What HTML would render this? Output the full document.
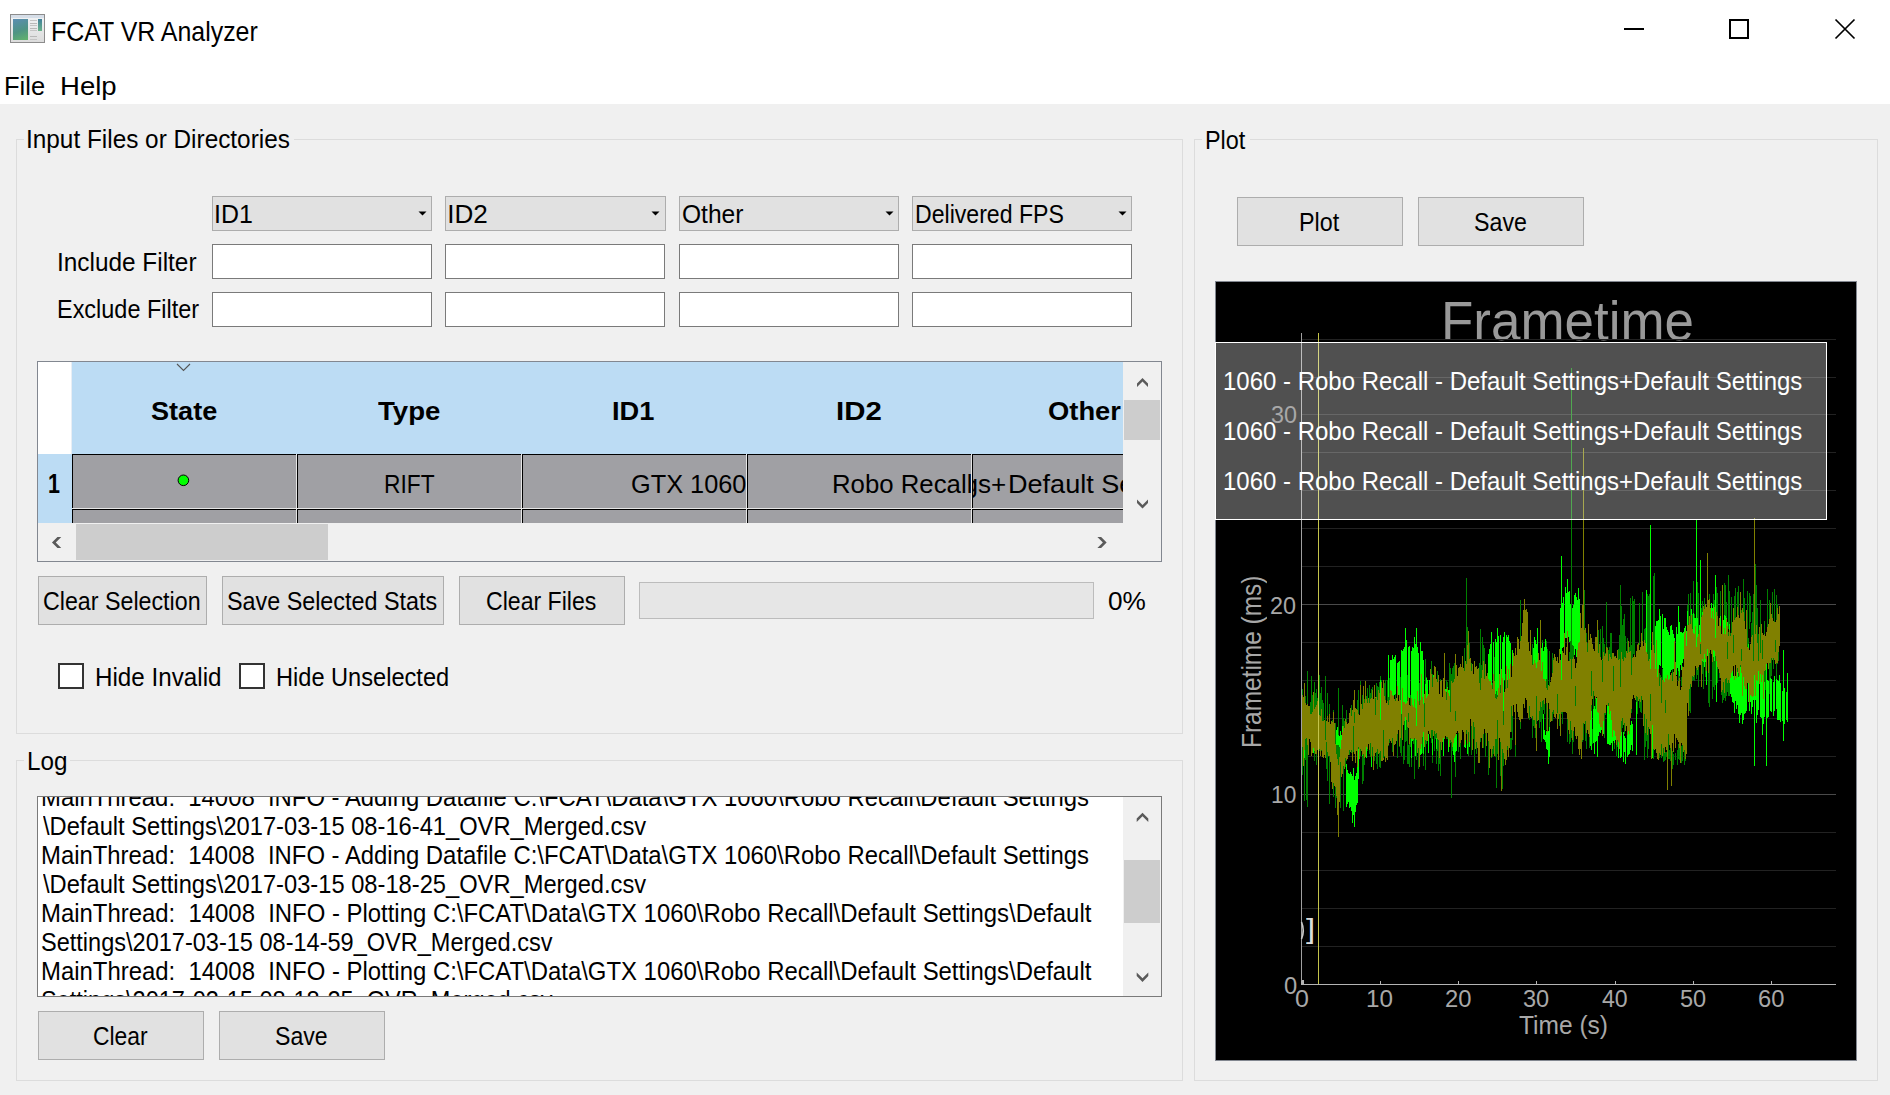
<!DOCTYPE html>
<html><head><meta charset="utf-8"><style>
*{margin:0;padding:0;box-sizing:border-box}
html,body{width:1890px;height:1095px;overflow:hidden;background:#f0f0f0;font-family:"Liberation Sans",sans-serif;color:#000}
.a{position:absolute}
.t{position:absolute;white-space:pre;line-height:1}
.btn{position:absolute;background:#e1e1e1;border:1px solid #adadad}
.edit{position:absolute;background:#fff;border:1px solid #7a7a7a}
.grp{position:absolute;border:1px solid #dcdcdc}
.lbl{position:absolute;background:#f0f0f0}
</style></head>
<body>
<div class="a" style="left:0px;top:0px;width:1890px;height:104px;background:#fff;"></div>
<div class="a" style="left:10px;top:14px;width:35px;height:29px;border:1px solid #8c8c8c;background:linear-gradient(#f2f4f6,#dcdcdc)">
      <div class="a" style="left:0;top:0;width:33px;height:3px;background:#d6dee8"></div>
      <div class="a" style="left:2px;top:4px;width:15px;height:21px;background:linear-gradient(160deg,#5b8db3,#4f9484 55%,#63b46c)"></div>
      <div class="a" style="left:19px;top:5px;width:7px;height:1px;background:#c4c4c4"></div>
      <div class="a" style="left:19px;top:8px;width:7px;height:1px;background:#b8b8b8"></div>
      <div class="a" style="left:19px;top:10px;width:7px;height:1px;background:#c4c4c4"></div>
      <div class="a" style="left:19px;top:13px;width:7px;height:1px;background:#b8b8b8"></div>
      <div class="a" style="left:19px;top:15px;width:7px;height:1px;background:#c4c4c4"></div>
      <div class="a" style="left:19px;top:21px;width:7px;height:1px;background:#b8b8b8"></div>
      <div class="a" style="left:19px;top:24px;width:7px;height:1px;background:#c4c4c4"></div>
      <div class="a" style="left:27px;top:4px;width:4px;height:12px;background:linear-gradient(#3f7f9a,#6ab48a)"></div>
    </div>
<div class="t" style="left:50.91px;top:18.00px;font-size:27.54px;transform:scaleX(0.9050);transform-origin:0 0;">FCAT VR Analyzer</div>
<div class="a" style="left:1624px;top:28px;width:20px;height:2px;background:#000;"></div>
<div class="a" style="left:1729px;top:19px;width:20px;height:20px;border:2px solid #000;"></div>
<svg class="a" style="left:1834px;top:18px" width="22" height="22" viewBox="0 0 22 22"><path d="M1.5 1.5L20.5 20.5M20.5 1.5L1.5 20.5" stroke="#000" stroke-width="1.7"/></svg>
<div class="t" style="left:3.96px;top:73.00px;font-size:26.09px;transform:scaleX(0.9776);transform-origin:0 0;">File</div>
<div class="t" style="left:60.49px;top:73.00px;font-size:26.09px;transform:scaleX(1.0571);transform-origin:0 0;">Help</div>
<div class="a" style="left:16px;top:139px;width:1167px;height:595px;border:1px solid #dcdcdc;"></div>
<div class="a" style="left:24px;top:130px;width:270px;height:20px;background:#f0f0f0;"></div>
<div class="t" style="left:26.41px;top:127.00px;font-size:25.36px;transform:scaleX(0.9603);transform-origin:0 0;">Input Files or Directories</div>
<div class="a" style="left:212px;top:196px;width:220px;height:35px;background:#e1e1e1;border:1px solid #adadad;"></div>
<div class="t" style="left:214.36px;top:201.00px;font-size:26.09px;transform:scaleX(0.9556);transform-origin:0 0;">ID1</div>
<svg class="a" style="left:418px;top:211px" width="10" height="6" viewBox="0 0 10 6"><path d="M0.5 0.5H8.5L4.5 4.5Z" fill="#000"/></svg>
<div class="a" style="left:212px;top:244px;width:220px;height:35px;background:#fff;border:1px solid #7a7a7a;"></div>
<div class="a" style="left:212px;top:292px;width:220px;height:35px;background:#fff;border:1px solid #7a7a7a;"></div>
<div class="a" style="left:445px;top:196px;width:221px;height:35px;background:#e1e1e1;border:1px solid #adadad;"></div>
<div class="t" style="left:447.25px;top:201.00px;font-size:26.09px;">ID2</div>
<svg class="a" style="left:651px;top:211px" width="10" height="6" viewBox="0 0 10 6"><path d="M0.5 0.5H8.5L4.5 4.5Z" fill="#000"/></svg>
<div class="a" style="left:445px;top:244px;width:220px;height:35px;background:#fff;border:1px solid #7a7a7a;"></div>
<div class="a" style="left:445px;top:292px;width:220px;height:35px;background:#fff;border:1px solid #7a7a7a;"></div>
<div class="a" style="left:679px;top:196px;width:220px;height:35px;background:#e1e1e1;border:1px solid #adadad;"></div>
<div class="t" style="left:682.37px;top:201.00px;font-size:26.09px;transform:scaleX(0.9426);transform-origin:0 0;">Other</div>
<svg class="a" style="left:885px;top:211px" width="10" height="6" viewBox="0 0 10 6"><path d="M0.5 0.5H8.5L4.5 4.5Z" fill="#000"/></svg>
<div class="a" style="left:679px;top:244px;width:220px;height:35px;background:#fff;border:1px solid #7a7a7a;"></div>
<div class="a" style="left:679px;top:292px;width:220px;height:35px;background:#fff;border:1px solid #7a7a7a;"></div>
<div class="a" style="left:912px;top:196px;width:220px;height:35px;background:#e1e1e1;border:1px solid #adadad;"></div>
<div class="t" style="left:914.75px;top:201.00px;font-size:26.09px;transform:scaleX(0.8855);transform-origin:0 0;">Delivered FPS</div>
<svg class="a" style="left:1118px;top:211px" width="10" height="6" viewBox="0 0 10 6"><path d="M0.5 0.5H8.5L4.5 4.5Z" fill="#000"/></svg>
<div class="a" style="left:912px;top:244px;width:220px;height:35px;background:#fff;border:1px solid #7a7a7a;"></div>
<div class="a" style="left:912px;top:292px;width:220px;height:35px;background:#fff;border:1px solid #7a7a7a;"></div>
<div class="t" style="left:56.51px;top:249.00px;font-size:26.09px;transform:scaleX(0.9345);transform-origin:0 0;">Include Filter</div>
<div class="t" style="left:56.82px;top:297.00px;font-size:25.80px;transform:scaleX(0.9093);transform-origin:0 0;">Exclude Filter</div>
<div class="a" style="left:37px;top:361px;width:1125px;height:201px;background:#f0f0f0;border:1px solid #828790;"></div>
<div class="a" style="left:38px;top:362px;width:34px;height:92px;background:#fff;"></div>
<div class="a" style="left:71px;top:362px;width:1px;height:92px;background:#e8eef4;"></div>
<div class="a" style="left:72px;top:362px;width:1051px;height:92px;background:#bcdcf4;"></div>
<div class="a" style="left:38px;top:454px;width:34px;height:69px;background:#bcdcf4;"></div>
<svg class="a" style="left:176px;top:363px" width="15" height="9" viewBox="0 0 15 9"><path d="M1 1L7.5 7.5L14 1" stroke="#555" stroke-width="1.1" fill="none"/></svg>
<div class="t" style="left:150.89px;top:398.00px;font-size:26.38px;transform:scaleX(1.0274);transform-origin:0 0;font-weight:bold;">State</div>
<div class="t" style="left:378.12px;top:398.00px;font-size:26.38px;transform:scaleX(1.0464);transform-origin:0 0;font-weight:bold;">Type</div>
<div class="t" style="left:611.79px;top:398.00px;font-size:26.38px;transform:scaleX(1.0335);transform-origin:0 0;font-weight:bold;">ID1</div>
<div class="t" style="left:836.04px;top:398.00px;font-size:26.38px;transform:scaleX(1.1138);transform-origin:0 0;font-weight:bold;">ID2</div>
<div class="t" style="left:1047.61px;top:398.00px;font-size:26.38px;transform:scaleX(1.0375);transform-origin:0 0;font-weight:bold;">Other</div>
<div class="t" style="left:48.11px;top:471.00px;font-size:26.81px;transform:scaleX(0.8015);transform-origin:0 0;font-weight:bold;">1</div>
<div class="a" style="left:72px;top:454px;width:1051px;height:69px;overflow:hidden;background:#e6e6e6">
<div class="a" style="left:0px;top:0px;width:224px;height:54px;background:#a0a0a4;border-left:1px solid #000;border-top:1px solid #000"></div>
<div class="a" style="left:0px;top:55px;width:224px;height:54px;background:#a0a0a4;border-left:1px solid #000;border-top:1px solid #000"></div>
<div class="a" style="left:225px;top:0px;width:224px;height:54px;background:#a0a0a4;border-left:1px solid #000;border-top:1px solid #000"></div>
<div class="a" style="left:225px;top:55px;width:224px;height:54px;background:#a0a0a4;border-left:1px solid #000;border-top:1px solid #000"></div>
<div class="a" style="left:450px;top:0px;width:224px;height:54px;background:#a0a0a4;border-left:1px solid #000;border-top:1px solid #000"></div>
<div class="a" style="left:450px;top:55px;width:224px;height:54px;background:#a0a0a4;border-left:1px solid #000;border-top:1px solid #000"></div>
<div class="a" style="left:675px;top:0px;width:224px;height:54px;background:#a0a0a4;border-left:1px solid #000;border-top:1px solid #000"></div>
<div class="a" style="left:675px;top:55px;width:224px;height:54px;background:#a0a0a4;border-left:1px solid #000;border-top:1px solid #000"></div>
<div class="a" style="left:900px;top:0px;width:224px;height:54px;background:#a0a0a4;border-left:1px solid #000;border-top:1px solid #000"></div>
<div class="a" style="left:900px;top:55px;width:224px;height:54px;background:#a0a0a4;border-left:1px solid #000;border-top:1px solid #000"></div>
</div>
<svg class="a" style="left:176px;top:473px" width="15" height="15" viewBox="0 0 15 15"><circle cx="7.4" cy="7.3" r="5.3" fill="#00ff00" stroke="#000" stroke-width="1"/></svg>
<div class="t" style="left:383.88px;top:471.00px;font-size:26.09px;transform:scaleX(0.8733);transform-origin:0 0;">RIFT</div>
<div class="a" style="left:522px;top:454px;width:224px;height:54px;overflow:hidden"><div class="t" style="left:108.53px;top:17.00px;font-size:26.09px;transform:scaleX(0.9708);transform-origin:0 0;">GTX 1060</div></div>
<div class="a" style="left:747px;top:454px;width:224px;height:54px;overflow:hidden"><div class="t" style="left:84.84px;top:17.00px;font-size:26.09px;transform:scaleX(0.9880);transform-origin:0 0;">Robo Recall</div></div>
<div class="a" style="left:973px;top:454px;width:150px;height:54px;overflow:hidden"><div class="t" style="left:-9.54px;top:17.00px;font-size:26.09px;">gs+</div><div class="t" style="left:34.63px;top:17.00px;font-size:26.09px;transform:scaleX(1.0380);transform-origin:0 0;">Default Settings</div></div>
<div class="a" style="left:1123px;top:362px;width:38px;height:161px;background:#f0f0f0;"></div>
<div class="a" style="left:1124px;top:400px;width:36px;height:40px;background:#cdcdcd;"></div>
<svg class="a" style="left:0;top:0;overflow:visible" width="1" height="1"><polygon points="1142.50,378.00 1148.00,383.50 1148.00,387.00 1142.50,381.50 1137.00,387.00 1137.00,383.50" fill="#5a5a5a"/></svg>
<svg class="a" style="left:0;top:0;overflow:visible" width="1" height="1"><polygon points="1142.50,508.50 1148.00,503.00 1148.00,499.50 1142.50,505.00 1137.00,499.50 1137.00,503.00" fill="#5a5a5a"/></svg>
<div class="a" style="left:38px;top:523px;width:1085px;height:38px;background:#f0f0f0;"></div>
<div class="a" style="left:76px;top:524px;width:252px;height:36px;background:#cdcdcd;"></div>
<svg class="a" style="left:0;top:0;overflow:visible" width="1" height="1"><polygon points="51.95,542.50 57.45,548.00 61.25,548.00 55.75,542.50 61.25,537.00 57.45,537.00" fill="#5a5a5a"/></svg>
<svg class="a" style="left:0;top:0;overflow:visible" width="1" height="1"><polygon points="1106.65,542.50 1101.15,548.00 1097.35,548.00 1102.85,542.50 1097.35,537.00 1101.15,537.00" fill="#5a5a5a"/></svg>
<div class="a" style="left:1123px;top:523px;width:38px;height:38px;background:#f0f0f0;"></div>
<div class="a" style="left:38px;top:576px;width:169px;height:49px;background:#e1e1e1;border:1px solid #adadad;"></div>
<div class="t" style="left:43.34px;top:588.00px;font-size:26.09px;transform:scaleX(0.8910);transform-origin:0 0;">Clear Selection</div>
<div class="a" style="left:222px;top:576px;width:222px;height:49px;background:#e1e1e1;border:1px solid #adadad;"></div>
<div class="t" style="left:227.13px;top:588.00px;font-size:26.09px;transform:scaleX(0.8946);transform-origin:0 0;">Save Selected Stats</div>
<div class="a" style="left:459px;top:576px;width:166px;height:49px;background:#e1e1e1;border:1px solid #adadad;"></div>
<div class="t" style="left:486.04px;top:588.00px;font-size:26.09px;transform:scaleX(0.8857);transform-origin:0 0;">Clear Files</div>
<div class="a" style="left:639px;top:582px;width:455px;height:37px;background:#e6e6e6;border:1px solid #bcbcbc;"></div>
<div class="t" style="left:1107.85px;top:589.00px;font-size:25.36px;transform:scaleX(1.0332);transform-origin:0 0;">0%</div>
<div class="a" style="left:58px;top:663px;width:26px;height:26px;background:#fff;border:2px solid #333;"></div>
<div class="t" style="left:94.96px;top:664.00px;font-size:26.09px;transform:scaleX(0.9281);transform-origin:0 0;">Hide Invalid</div>
<div class="a" style="left:239px;top:663px;width:26px;height:26px;background:#fff;border:2px solid #333;"></div>
<div class="t" style="left:275.61px;top:664.00px;font-size:26.09px;transform:scaleX(0.9048);transform-origin:0 0;">Hide Unselected</div>
<div class="a" style="left:16px;top:760px;width:1167px;height:321px;border:1px solid #dcdcdc;"></div>
<div class="a" style="left:24px;top:750px;width:46px;height:22px;background:#f0f0f0;"></div>
<div class="t" style="left:26.96px;top:749.00px;font-size:25.36px;transform:scaleX(0.9572);transform-origin:0 0;">Log</div>
<div class="a" style="left:37px;top:796px;width:1125px;height:201px;background:#fff;border:1px solid #7a7a7a;"></div>
<div class="a" style="left:38px;top:797px;width:1085px;height:199px;overflow:hidden">
<div class="t" style="left:3.09px;top:-12.00px;font-size:25.94px;transform:scaleX(0.9205);transform-origin:0 0;">MainThread:  14008  INFO - Adding Datafile C:\FCAT\Data\GTX 1060\Robo Recall\Default Settings</div>
<div class="t" style="left:5.00px;top:17.00px;font-size:25.94px;transform:scaleX(0.9134);transform-origin:0 0;">\Default Settings\2017-03-15 08-16-41_OVR_Merged.csv</div>
<div class="t" style="left:3.09px;top:46.00px;font-size:25.94px;transform:scaleX(0.9205);transform-origin:0 0;">MainThread:  14008  INFO - Adding Datafile C:\FCAT\Data\GTX 1060\Robo Recall\Default Settings</div>
<div class="t" style="left:5.00px;top:75.00px;font-size:25.94px;transform:scaleX(0.9134);transform-origin:0 0;">\Default Settings\2017-03-15 08-18-25_OVR_Merged.csv</div>
<div class="t" style="left:3.09px;top:104.00px;font-size:25.94px;transform:scaleX(0.9215);transform-origin:0 0;">MainThread:  14008  INFO - Plotting C:\FCAT\Data\GTX 1060\Robo Recall\Default Settings\Default</div>
<div class="t" style="left:3.32px;top:133.00px;font-size:25.94px;transform:scaleX(0.9073);transform-origin:0 0;">Settings\2017-03-15 08-14-59_OVR_Merged.csv</div>
<div class="t" style="left:3.09px;top:162.00px;font-size:25.94px;transform:scaleX(0.9215);transform-origin:0 0;">MainThread:  14008  INFO - Plotting C:\FCAT\Data\GTX 1060\Robo Recall\Default Settings\Default</div>
<div class="t" style="left:3.32px;top:191.00px;font-size:25.94px;transform:scaleX(0.9073);transform-origin:0 0;">Settings\2017-03-15 08-18-25_OVR_Merged.csv</div>
</div>
<div class="a" style="left:1123px;top:797px;width:38px;height:199px;background:#f0f0f0;"></div>
<div class="a" style="left:1124px;top:860px;width:36px;height:63px;background:#cdcdcd;"></div>
<svg class="a" style="left:0;top:0;overflow:visible" width="1" height="1"><polygon points="1142.50,812.70 1148.30,818.50 1148.30,822.10 1142.50,816.30 1136.70,822.10 1136.70,818.50" fill="#5a5a5a"/></svg>
<svg class="a" style="left:0;top:0;overflow:visible" width="1" height="1"><polygon points="1142.50,981.90 1148.30,976.10 1148.30,972.50 1142.50,978.30 1136.70,972.50 1136.70,976.10" fill="#5a5a5a"/></svg>
<div class="a" style="left:38px;top:1011px;width:166px;height:49px;background:#e1e1e1;border:1px solid #adadad;"></div>
<div class="t" style="left:93.26px;top:1023.00px;font-size:26.09px;transform:scaleX(0.8769);transform-origin:0 0;">Clear</div>
<div class="a" style="left:219px;top:1011px;width:166px;height:49px;background:#e1e1e1;border:1px solid #adadad;"></div>
<div class="t" style="left:275.04px;top:1023.00px;font-size:26.09px;transform:scaleX(0.8862);transform-origin:0 0;">Save</div>
<div class="a" style="left:1194px;top:139px;width:684px;height:942px;border:1px solid #dcdcdc;"></div>
<div class="a" style="left:1202px;top:130px;width:48px;height:20px;background:#f0f0f0;"></div>
<div class="t" style="left:1205.03px;top:128.00px;font-size:25.51px;transform:scaleX(0.9180);transform-origin:0 0;">Plot</div>
<div class="a" style="left:1237px;top:197px;width:166px;height:49px;background:#e1e1e1;border:1px solid #adadad;"></div>
<div class="t" style="left:1299.14px;top:210.00px;font-size:25.80px;transform:scaleX(0.9029);transform-origin:0 0;">Plot</div>
<div class="a" style="left:1418px;top:197px;width:166px;height:49px;background:#e1e1e1;border:1px solid #adadad;"></div>
<div class="t" style="left:1474.04px;top:210.00px;font-size:25.80px;transform:scaleX(0.8998);transform-origin:0 0;">Save</div>
<div class="a" style="left:1215px;top:281px;width:642px;height:780px;background:#000;border:1px solid #828790"></div>
<div class="t" style="left:1441.16px;top:293.00px;font-size:56.38px;transform:scaleX(0.9395);transform-origin:0 0;color:#999999;">Frametime</div>
<svg class="a" style="left:0;top:0" width="1890" height="1095" viewBox="0 0 1890 1095" shape-rendering="crispEdges">
<path d="M1302 946.5H1836" stroke="#222222" stroke-width="1"/>
<path d="M1302 908.5H1836" stroke="#222222" stroke-width="1"/>
<path d="M1302 870.5H1836" stroke="#222222" stroke-width="1"/>
<path d="M1302 832.5H1836" stroke="#222222" stroke-width="1"/>
<path d="M1302 794.5H1836" stroke="#4a4a4a" stroke-width="1"/>
<path d="M1302 756.5H1836" stroke="#222222" stroke-width="1"/>
<path d="M1302 718.5H1836" stroke="#222222" stroke-width="1"/>
<path d="M1302 680.5H1836" stroke="#222222" stroke-width="1"/>
<path d="M1302 642.5H1836" stroke="#222222" stroke-width="1"/>
<path d="M1302 604.5H1836" stroke="#4a4a4a" stroke-width="1"/>
<path d="M1302 566.5H1836" stroke="#222222" stroke-width="1"/>
<path d="M1302 528.5H1836" stroke="#222222" stroke-width="1"/>
<path d="M1302 490.5H1836" stroke="#222222" stroke-width="1"/>
<path d="M1302 452.5H1836" stroke="#222222" stroke-width="1"/>
<path d="M1302 414.5H1836" stroke="#222222" stroke-width="1"/>
<path d="M1302 377.5H1836" stroke="#222222" stroke-width="1"/>
<path d="M1302 339.5H1836" stroke="#222222" stroke-width="1"/>
<path d="M1302.5 689V757M1304.5 691V768M1305.5 696V760M1310.5 702V736M1311.5 676V736M1312.5 695V737M1314.5 682V761M1315.5 693V743M1316.5 689V765M1317.5 698V738M1318.5 702V748M1319.5 675V751M1320.5 693V741M1321.5 687V751M1322.5 700V749M1323.5 703V751M1327.5 693V781M1329.5 704V804M1332.5 720V781M1333.5 710V797M1335.5 723V795M1336.5 739V798M1337.5 737V798M1338.5 688V791M1342.5 705V760M1343.5 718V767M1344.5 721V765M1345.5 723V767M1346.5 710V761M1349.5 714V755M1351.5 705V753M1357.5 700V755M1358.5 690V754M1360.5 681V756M1362.5 695V784M1363.5 695V781M1364.5 699V765M1365.5 696V749M1366.5 696V748M1367.5 688V751M1369.5 685V754M1370.5 693V757M1372.5 702V756M1373.5 704V758M1374.5 701V761M1376.5 700V764M1377.5 686V769M1379.5 688V767M1380.5 676V768M1381.5 680V760M1383.5 685V754M1384.5 683V757M1385.5 682V754M1387.5 680V757M1388.5 684V746M1389.5 678V743M1392.5 680V752M1395.5 685V743M1397.5 684V758M1399.5 682V747M1400.5 677V753M1401.5 676V756M1404.5 683V752M1405.5 676V742M1406.5 678V741M1407.5 675V750M1410.5 695V747M1411.5 691V754M1413.5 682V744M1416.5 688V745M1418.5 684V741M1419.5 683V740M1420.5 687V751M1421.5 674V746M1422.5 678V753M1423.5 681V747M1425.5 659V744M1426.5 677V744M1431.5 661V743M1432.5 674V740M1434.5 680V751M1435.5 675V739M1436.5 679V749M1437.5 671V751M1438.5 676V745M1440.5 679V776M1441.5 680V749M1443.5 678V745M1446.5 680V739M1447.5 682V739M1449.5 663V742M1450.5 686V743M1451.5 674V798M1452.5 668V751M1453.5 666V752M1454.5 663V753M1455.5 676V777M1458.5 677V752M1460.5 666V759M1464.5 648V747M1466.5 578V734M1467.5 627V746M1468.5 637V756M1469.5 643V734M1471.5 663V755M1472.5 668V729M1474.5 685V774M1476.5 671V754M1479.5 663V736M1480.5 660V742M1481.5 665V736M1482.5 682V746M1483.5 659V748M1485.5 679V757M1488.5 693V775M1489.5 688V761M1491.5 687V758M1492.5 683V757M1493.5 685V754M1494.5 679V754M1495.5 684V750M1496.5 676V788M1497.5 665V754M1500.5 643V776M1501.5 669V773M1502.5 668V789M1503.5 682V766M1505.5 674V764M1507.5 668V746M1512.5 675V740M1514.5 673V710M1517.5 643V711M1518.5 656V704M1519.5 658V709M1520.5 600V729M1521.5 656V694M1522.5 639V689M1523.5 638V692M1527.5 646V712M1528.5 650V709M1530.5 642V716M1532.5 644V738M1533.5 649V726M1534.5 646V728M1535.5 655V738M1536.5 659V736M1537.5 653V720M1539.5 662V728M1540.5 664V722M1541.5 655V742M1542.5 640V719M1543.5 658V710M1544.5 647V714M1546.5 641V730M1547.5 649V709M1549.5 651V743M1552.5 653V721M1553.5 658V714M1555.5 665V711M1559.5 672V726M1561.5 640V714M1562.5 662V724M1563.5 658V704M1564.5 651V712M1567.5 651V742M1569.5 652V744M1570.5 639V742M1571.5 652V738M1572.5 626V754M1573.5 638V742M1577.5 640V722M1580.5 615V709M1581.5 637V720M1583.5 598V722M1584.5 590V721M1586.5 633V717M1587.5 643V716M1588.5 653V733M1590.5 665V706M1591.5 662V725M1593.5 663V718M1595.5 657V715M1599.5 647V723M1600.5 669V726M1603.5 638V722M1604.5 644V738M1605.5 653V715M1607.5 647V714M1608.5 650V721M1609.5 647V719M1611.5 646V724M1614.5 656V749M1616.5 671V756M1617.5 677V747M1618.5 649V747M1619.5 677V732M1620.5 665V730M1621.5 648V741M1622.5 639V728M1624.5 642V734M1625.5 636V718M1627.5 648V733M1628.5 645V712M1629.5 647V719M1631.5 645V713M1634.5 632V695M1636.5 656V704M1637.5 644V714M1639.5 659V708M1640.5 662V712M1641.5 649V713M1644.5 629V760M1645.5 628V747M1646.5 629V741M1647.5 631V758M1648.5 638V749M1650.5 648V729M1651.5 656V738M1653.5 643V759M1657.5 671V742M1659.5 673V740M1660.5 675V748M1662.5 669V735M1663.5 669V738M1665.5 649V736M1666.5 644V743M1668.5 669V758M1669.5 673V738M1671.5 675V750M1672.5 667V734M1674.5 650V734M1678.5 652V734M1679.5 646V746M1682.5 666V734M1683.5 668V730M1684.5 669V728M1685.5 654V737M1686.5 645V733M1687.5 605V696M1688.5 594V688M1689.5 631V711M1690.5 619V713M1692.5 614V681M1693.5 616V680M1694.5 614V681M1696.5 594V679M1697.5 616V675M1698.5 593V687M1701.5 608V682M1702.5 601V674M1703.5 615V689M1705.5 624V677M1706.5 624V675M1708.5 629V703M1709.5 620V707M1712.5 614V699M1713.5 594V687M1714.5 600V690M1715.5 602V685M1716.5 607V693M1717.5 593V683M1719.5 626V678M1721.5 637V695M1722.5 635V703M1723.5 629V700M1724.5 635V698M1725.5 630V701M1726.5 602V696M1727.5 628V692M1728.5 632V696M1729.5 631V696M1730.5 633V683M1731.5 626V694M1734.5 628V676M1737.5 611V684M1738.5 600V683M1740.5 594V676M1741.5 610V672M1745.5 630V686M1746.5 624V680M1747.5 627V681M1748.5 638V683M1751.5 623V675M1752.5 612V674M1753.5 616V677M1754.5 614V681M1755.5 600V683M1757.5 608V680M1760.5 619V683M1764.5 621V703M1765.5 636V690M1766.5 635V703M1769.5 629V694M1770.5 627V707M1771.5 629V676M1773.5 630V669M1776.5 617V680M1777.5 604V664M1778.5 619V661M1302.5 695V775M1304.5 697V801M1307.5 671V807M1333.5 718V796M1335.5 734V808M1339.5 737V792M1340.5 737V808M1343.5 735V811M1369.5 687V701M1371.5 689V703M1372.5 687V697M1376.5 683V703M1377.5 688V699M1378.5 687V700M1379.5 682V701M1380.5 687V705M1381.5 688V698M1382.5 688V700M1383.5 690V698M1385.5 680V704M1387.5 683V701M1388.5 680V697M1390.5 683V695M1391.5 681V695M1393.5 680V694M1394.5 678V688M1403.5 746V764M1404.5 747V760M1407.5 743V764M1408.5 745V764M1409.5 744V767M1411.5 738V767M1414.5 738V779M1416.5 735V760M1418.5 736V769M1423.5 740V766M1425.5 742V770M1432.5 736V763M1436.5 736V764M1438.5 737V771M1439.5 733V764M1440.5 740V768M1482.5 637V681M1483.5 645V683M1484.5 648V680M1490.5 649V685M1491.5 652V683M1494.5 657V684M1495.5 739V757M1496.5 738V751M1497.5 734V751M1503.5 729V743M1504.5 734V744M1507.5 733V750M1510.5 738V750M1511.5 738V749M1515.5 743V757M1581.5 723V747M1582.5 719V742M1583.5 720V740M1585.5 717V741M1586.5 713V749M1589.5 725V748M1591.5 728V743M1592.5 729V744M1597.5 629V667M1598.5 630V678M1600.5 629V675M1602.5 626V668M1606.5 602V656M1610.5 633V667M1611.5 633V675M1619.5 635V664M1620.5 635V669M1621.5 606V668M1622.5 625V660M1623.5 619V665M1624.5 614V657M1627.5 638V658M1628.5 641V660M1630.5 598V660M1632.5 596V659M1633.5 601V654M1634.5 599V650M1639.5 603V645M1642.5 592V643M1647.5 594V653M1648.5 596V649M1649.5 594V666M1653.5 576V661M1654.5 573V658M1659.5 742V758M1661.5 743V758M1663.5 747V762M1664.5 747V761M1665.5 752V760M1666.5 752V757M1668.5 749V757M1669.5 750V759M1670.5 747V761M1671.5 744V762M1672.5 751V769M1673.5 754V765M1675.5 753V760M1677.5 750V765M1678.5 744V759M1679.5 748V760M1681.5 746V763M1682.5 743V761M1684.5 745V765M1685.5 742V761M1690.5 593V653M1693.5 581V642M1697.5 582V635M1700.5 592V634M1702.5 604V633M1704.5 598V625M1709.5 594V626M1716.5 587V629M1720.5 591V625M1724.5 583V635M1725.5 585V636M1728.5 575V629M1729.5 591V628M1731.5 597V645M1734.5 596V642M1735.5 588V640M1737.5 592V638M1738.5 586V647M1743.5 579V634M1744.5 598V633M1747.5 591V636M1749.5 593V629M1750.5 596V622M1753.5 594V628M1754.5 593V626M1755.5 564V642M1756.5 585V627M1767.5 589V646M1769.5 600V637M1770.5 603V635M1772.5 592V632M1774.5 589V638M1776.5 595V631" stroke="#008000" stroke-width="1" fill="none"/>
<path d="M1304.5 742V758M1313.5 741V753M1315.5 740V754M1324.5 731V752M1328.5 737V754M1329.5 737V755M1411.5 737V758M1415.5 737V756M1420.5 732V755M1421.5 738V754M1423.5 732V754M1428.5 734V753M1432.5 739V755M1436.5 738V749M1443.5 731V756M1448.5 733V752M1453.5 728V755M1454.5 732V762M1455.5 730V752M1456.5 734V751M1464.5 735V747M1465.5 735V748M1467.5 733V754M1469.5 728V747M1336.5 730V745M1337.5 727V745M1338.5 735V745M1339.5 736V747M1340.5 731V751M1341.5 735V757M1342.5 726V744M1346.5 764V807M1347.5 770V804M1348.5 773V802M1349.5 774V808M1350.5 772V807M1351.5 774V811M1352.5 776V823M1353.5 768V815M1354.5 780V827M1355.5 776V812M1356.5 773V805M1357.5 759V803M1358.5 749V779M1362.5 740V756M1366.5 740V758M1371.5 742V767M1388.5 655V697M1390.5 660V709M1391.5 660V702M1392.5 655V703M1393.5 659V703M1394.5 657V695M1395.5 655V694M1397.5 663V701M1398.5 662V695M1399.5 661V699M1401.5 656V707M1402.5 651V703M1403.5 649V709M1404.5 647V706M1405.5 628V730M1406.5 640V711M1408.5 647V709M1409.5 646V698M1411.5 651V701M1412.5 647V741M1413.5 648V709M1414.5 637V706M1415.5 644V712M1416.5 647V710M1417.5 647V710M1418.5 653V726M1420.5 642V714M1421.5 651V718M1422.5 651V711M1423.5 660V715M1425.5 684V702M1426.5 678V702M1427.5 680V701M1429.5 680V707M1431.5 683V714M1433.5 675V719M1443.5 686V694M1444.5 687V693M1445.5 689V692M1446.5 689V692M1447.5 687V694M1448.5 690V697M1449.5 690V697M1450.5 691V699M1451.5 689V699M1452.5 691V700M1488.5 654V690M1489.5 649V692M1490.5 644V685M1491.5 632V689M1493.5 642V678M1495.5 639V694M1496.5 642V691M1497.5 628V695M1498.5 636V705M1500.5 635V685M1502.5 642V691M1503.5 637V682M1504.5 632V680M1506.5 635V684M1507.5 637V680M1508.5 635V687M1509.5 641V685M1510.5 643V691M1512.5 650V686M1513.5 654V693M1533.5 648V674M1534.5 637V679M1535.5 640V690M1536.5 644V685M1537.5 628V684M1540.5 642V687M1541.5 648V688M1542.5 643V691M1543.5 651V685M1544.5 647V685M1545.5 639V684M1546.5 647V679M1560.5 608V654M1561.5 603V651M1562.5 603V648M1563.5 597V647M1565.5 587V638M1566.5 593V638M1567.5 579V640M1568.5 592V637M1569.5 591V642M1570.5 604V641M1571.5 606V640M1572.5 608V645M1573.5 605V646M1574.5 595V655M1575.5 593V649M1576.5 597V657M1577.5 600V654M1578.5 588V643M1579.5 599V643M1543.5 714V739M1544.5 730V740M1545.5 735V742M1546.5 731V749M1547.5 730V750M1548.5 731V764M1549.5 727V757M1590.5 709V746M1591.5 711V750M1593.5 709V743M1594.5 706V754M1595.5 709V742M1596.5 698V741M1597.5 705V757M1598.5 695V736M1599.5 707V732M1600.5 704V733M1601.5 713V730M1602.5 716V734M1603.5 710V734M1607.5 706V744M1608.5 706V744M1609.5 698V745M1610.5 698V745M1611.5 700V743M1612.5 699V751M1613.5 699V741M1614.5 691V743M1615.5 698V740M1618.5 726V758M1620.5 729V758M1621.5 732V757M1623.5 732V762M1624.5 736V752M1625.5 738V764M1627.5 731V757M1628.5 725V755M1629.5 727V754M1630.5 725V750M1631.5 721V745M1632.5 724V751M1655.5 626V669M1656.5 621V675M1657.5 621V688M1658.5 620V671M1659.5 609V665M1660.5 616V666M1662.5 614V668M1663.5 629V680M1664.5 618V683M1665.5 618V688M1666.5 627V684M1667.5 630V691M1668.5 632V684M1669.5 635V679M1670.5 626V672M1671.5 625V670M1672.5 630V669M1673.5 634V669M1674.5 638V668M1676.5 627V675M1677.5 634V668M1678.5 606V671M1679.5 622V676M1680.5 632V665M1681.5 632V670M1682.5 633V663M1683.5 632V659M1684.5 628V663M1685.5 626V676M1686.5 631V687M1687.5 611V692M1688.5 626V690M1691.5 609V658M1693.5 613V654M1694.5 618V656M1695.5 618V653M1697.5 618V649M1699.5 625V652M1700.5 625V661M1701.5 624V657M1702.5 612V661M1703.5 621V662M1704.5 614V667M1705.5 608V662M1706.5 622V685M1707.5 630V656M1708.5 627V651M1709.5 603V649M1710.5 613V648M1711.5 603V648M1712.5 608V656M1713.5 604V657M1714.5 618V661M1716.5 627V702M1717.5 625V661M1720.5 616V662M1722.5 614V673M1723.5 620V679M1724.5 615V668M1725.5 616V665M1726.5 618V666M1727.5 622V677M1729.5 624V672M1730.5 660V694M1731.5 661V697M1732.5 670V702M1733.5 676V703M1734.5 676V713M1735.5 676V701M1736.5 673V709M1737.5 672V705M1738.5 677V714M1739.5 671V723M1740.5 667V715M1741.5 668V713M1742.5 668V724M1743.5 662V720M1744.5 663V714M1745.5 658V713M1746.5 665V711M1748.5 644V702M1749.5 665V711M1750.5 663V702M1751.5 658V711M1751.5 664V714M1752.5 676V707M1753.5 675V700M1754.5 669V706M1755.5 671V700M1756.5 666V723M1757.5 669V715M1758.5 669V710M1760.5 666V717M1761.5 671V718M1762.5 674V735M1763.5 677V724M1764.5 682V717M1766.5 676V720M1767.5 680V718M1768.5 681V717M1770.5 678V711M1771.5 679V712M1773.5 682V716M1774.5 676V711M1776.5 679V709M1777.5 680V720M1778.5 681V720M1779.5 675V720M1780.5 683V722M1782.5 691V721M1783.5 690V717M1784.5 688V724M1786.5 692V720M1787.5 673V722" stroke="#00ff00" stroke-width="1" fill="none"/>
<path d="M1302.5 695V747M1303.5 697V766M1304.5 683V750M1305.5 703V739M1306.5 705V752M1307.5 704V745M1308.5 706V755M1309.5 706V739M1310.5 714V742M1311.5 714V756M1312.5 712V753M1313.5 692V748M1314.5 709V751M1315.5 707V754M1316.5 705V754M1317.5 701V750M1318.5 708V751M1319.5 715V749M1320.5 716V756M1321.5 709V750M1322.5 721V757M1323.5 721V758M1324.5 720V755M1325.5 724V758M1326.5 721V753M1327.5 716V752M1328.5 722V756M1329.5 714V756M1330.5 724V762M1331.5 721V782M1332.5 722V789M1333.5 712V783M1334.5 723V786M1335.5 744V787M1336.5 754V796M1337.5 759V815M1338.5 765V837M1339.5 757V802M1340.5 749V786M1341.5 740V777M1342.5 732V774M1343.5 726V766M1344.5 728V769M1345.5 719V758M1346.5 722V760M1347.5 724V759M1348.5 723V755M1349.5 713V750M1350.5 708V752M1351.5 716V750M1352.5 710V761M1353.5 700V748M1354.5 690V754M1355.5 708V763M1356.5 709V751M1357.5 710V767M1358.5 714V747M1359.5 715V759M1360.5 705V749M1361.5 704V751M1362.5 709V755M1363.5 686V754M1364.5 703V758M1365.5 681V757M1366.5 699V747M1367.5 703V749M1368.5 698V744M1369.5 703V750M1370.5 699V743M1371.5 698V757M1372.5 690V747M1373.5 699V770M1374.5 685V756M1375.5 697V753M1376.5 697V752M1377.5 700V749M1378.5 690V754M1379.5 693V753M1380.5 696V751M1381.5 682V761M1382.5 688V761M1383.5 680V760M1384.5 696V756M1385.5 700V762M1386.5 703V758M1387.5 701V760M1388.5 705V745M1389.5 700V739M1390.5 690V741M1391.5 691V743M1392.5 695V738M1393.5 696V756M1394.5 699V745M1395.5 701V744M1396.5 698V741M1397.5 686V734M1398.5 701V730M1399.5 695V746M1400.5 700V738M1401.5 693V726M1402.5 688V740M1403.5 702V725M1404.5 702V721M1405.5 704V717M1406.5 703V720M1407.5 701V727M1408.5 697V728M1409.5 705V744M1410.5 706V738M1411.5 698V739M1412.5 705V739M1413.5 707V740M1414.5 699V738M1415.5 708V739M1416.5 707V740M1417.5 691V753M1418.5 701V748M1419.5 705V767M1420.5 700V749M1421.5 674V744M1422.5 697V737M1423.5 704V732M1424.5 694V747M1425.5 691V740M1426.5 698V741M1427.5 696V741M1428.5 694V731M1429.5 690V734M1430.5 669V738M1431.5 674V730M1432.5 687V730M1433.5 677V736M1434.5 666V731M1435.5 667V734M1436.5 679V733M1437.5 682V739M1438.5 675V740M1439.5 694V758M1440.5 681V742M1441.5 680V750M1442.5 697V742M1443.5 678V738M1444.5 653V739M1445.5 691V736M1446.5 700V737M1447.5 688V737M1448.5 693V739M1449.5 696V747M1450.5 678V740M1451.5 681V742M1452.5 683V747M1453.5 682V743M1454.5 679V738M1455.5 654V736M1456.5 665V733M1457.5 676V731M1458.5 668V733M1459.5 667V747M1460.5 664V743M1461.5 667V740M1462.5 656V730M1463.5 668V732M1464.5 671V745M1465.5 661V740M1466.5 664V730M1467.5 645V744M1468.5 631V732M1469.5 659V742M1470.5 658V719M1471.5 671V726M1472.5 664V750M1473.5 674V732M1474.5 661V727M1475.5 667V749M1476.5 666V742M1477.5 669V748M1478.5 668V763M1479.5 683V763M1480.5 685V738M1481.5 678V738M1482.5 670V748M1483.5 661V734M1484.5 679V729M1485.5 664V733M1486.5 676V746M1487.5 673V733M1488.5 679V741M1489.5 681V768M1490.5 681V749M1491.5 685V757M1492.5 689V749M1493.5 674V746M1494.5 681V756M1495.5 698V739M1496.5 699V739M1497.5 697V735M1498.5 688V760M1499.5 674V738M1500.5 693V742M1501.5 669V791M1502.5 678V749M1503.5 684V753M1504.5 692V759M1505.5 689V765M1506.5 666V760M1507.5 688V746M1508.5 669V757M1509.5 679V748M1510.5 664V732M1511.5 677V721M1512.5 666V716M1513.5 653V705M1514.5 656V712M1515.5 648V745M1516.5 655V704M1517.5 637V712M1518.5 639V717M1519.5 649V720M1520.5 641V722M1521.5 636V719M1522.5 623V719M1523.5 610V704M1524.5 599V708M1525.5 610V698M1526.5 609V700M1527.5 628V713M1528.5 642V718M1529.5 651V710M1530.5 630V717M1531.5 655V718M1532.5 665V716M1533.5 664V720M1534.5 660V720M1535.5 663V728M1536.5 668V751M1537.5 662V721M1538.5 653V720M1539.5 660V711M1540.5 659V704M1541.5 671V707M1542.5 662V701M1543.5 679V700M1544.5 679V704M1545.5 681V698M1546.5 688V703M1547.5 690V732M1548.5 685V703M1549.5 686V709M1550.5 682V722M1551.5 677V721M1552.5 673V712M1553.5 660V710M1554.5 654V717M1555.5 657V718M1556.5 661V714M1557.5 657V729M1558.5 663V719M1559.5 649V714M1560.5 660V736M1561.5 636V712M1562.5 651V712M1563.5 653V712M1564.5 633V712M1565.5 655V712M1566.5 647V713M1567.5 631V719M1568.5 661V730M1569.5 661V734M1570.5 659V721M1571.5 656V730M1572.5 659V740M1573.5 657V731M1574.5 659V727M1575.5 668V736M1576.5 663V739M1577.5 650V736M1578.5 643V749M1579.5 642V755M1580.5 613V749M1581.5 628V759M1582.5 605V740M1583.5 601V723M1584.5 630V724M1585.5 628V721M1586.5 642V733M1587.5 652V730M1588.5 624V734M1589.5 640V737M1590.5 634V720M1591.5 638V705M1592.5 644V699M1593.5 649V691M1594.5 651V696M1595.5 637V699M1596.5 637V697M1597.5 620V712M1598.5 653V713M1599.5 644V724M1600.5 657V727M1601.5 660V727M1602.5 659V736M1603.5 652V721M1604.5 656V713M1605.5 654V713M1606.5 647V705M1607.5 648V706M1608.5 661V703M1609.5 654V714M1610.5 657V711M1611.5 659V720M1612.5 653V737M1613.5 653V730M1614.5 657V731M1615.5 656V736M1616.5 658V745M1617.5 650V740M1618.5 660V742M1619.5 659V749M1620.5 658V736M1621.5 652V721M1622.5 659V718M1623.5 661V725M1624.5 657V723M1625.5 658V731M1626.5 651V726M1627.5 653V735M1628.5 641V731M1629.5 652V734M1630.5 651V718M1631.5 658V709M1632.5 658V699M1633.5 657V695M1634.5 655V698M1635.5 657V700M1636.5 651V696M1637.5 645V697M1638.5 643V701M1639.5 650V699M1640.5 647V702M1641.5 633V696M1642.5 641V700M1643.5 646V726M1644.5 640V714M1645.5 643V733M1646.5 651V719M1647.5 654V735M1648.5 661V727M1649.5 659V729M1650.5 660V734M1651.5 650V759M1652.5 632V741M1653.5 645V749M1654.5 653V750M1655.5 669V749M1656.5 640V753M1657.5 677V759M1658.5 669V760M1659.5 686V753M1660.5 678V755M1661.5 686V744M1662.5 680V756M1663.5 680V748M1664.5 682V753M1665.5 678V747M1666.5 679V750M1667.5 675V790M1668.5 680V743M1669.5 679V745M1670.5 675V748M1671.5 673V786M1672.5 681V743M1673.5 672V752M1674.5 641V734M1675.5 662V748M1676.5 676V738M1677.5 686V740M1678.5 681V742M1679.5 678V748M1680.5 690V763M1681.5 687V743M1682.5 667V745M1683.5 667V752M1684.5 633V750M1685.5 631V759M1686.5 646V754M1687.5 625V703M1688.5 625V716M1689.5 616V689M1690.5 624V684M1691.5 615V687M1692.5 629V676M1693.5 633V677M1694.5 634V675M1695.5 626V666M1696.5 628V668M1697.5 637V670M1698.5 634V667M1699.5 630V665M1700.5 618V665M1701.5 617V687M1702.5 615V659M1703.5 606V661M1704.5 609V654M1705.5 604V659M1706.5 607V671M1707.5 604V649M1708.5 600V673M1709.5 599V653M1710.5 608V650M1711.5 618V654M1712.5 611V662M1713.5 619V650M1714.5 607V651M1715.5 613V656M1716.5 612V661M1717.5 616V667M1718.5 626V669M1719.5 618V673M1720.5 626V678M1721.5 634V692M1722.5 635V690M1723.5 634V682M1724.5 628V693M1725.5 634V679M1726.5 619V678M1727.5 626V683M1728.5 636V680M1729.5 630V683M1730.5 636V678M1731.5 633V673M1732.5 622V671M1733.5 608V666M1734.5 620V680M1735.5 618V665M1736.5 617V678M1737.5 607V668M1738.5 615V673M1739.5 618V676M1740.5 609V665M1741.5 613V673M1742.5 608V696M1743.5 612V677M1744.5 621V686M1745.5 629V689M1746.5 610V689M1747.5 647V683M1748.5 648V683M1749.5 650V703M1750.5 644V695M1751.5 637V696M1752.5 635V697M1753.5 639V696M1754.5 612V715M1755.5 634V696M1756.5 625V680M1757.5 643V681M1758.5 635V671M1759.5 627V684M1760.5 636V674M1761.5 624V682M1762.5 633V675M1763.5 635V699M1764.5 634V671M1765.5 636V670M1766.5 632V668M1767.5 627V663M1768.5 624V669M1769.5 619V663M1770.5 603V663M1771.5 614V658M1772.5 618V660M1773.5 621V658M1774.5 622V660M1775.5 622V664M1776.5 621V663M1777.5 608V663M1778.5 614V652M1779.5 606V646" stroke="#808000" stroke-width="1" fill="none"/>
<path d="M1326.5 742V769M1340.5 762V787M1353.5 726V752M1354.5 712V723M1375.5 698V715M1383.5 730V758M1401.5 697V726M1408.5 713V722M1424.5 703V727M1455.5 711V721M1473.5 722V739M1497.5 720V736M1503.5 702V725M1511.5 706V732M1529.5 706V720M1536.5 696V724M1540.5 702V722M1557.5 694V713M1575.5 686V706M1591.5 671V696M1602.5 660V682M1613.5 666V691M1631.5 648V675M1650.5 694V721M1661.5 677V703M1665.5 700V713M1668.5 734V759M1681.5 677V686M1700.5 644V654M1727.5 642V659M1733.5 635V653M1741.5 649V661M1753.5 633V661M1758.5 634V661M1762.5 640V659M1775.5 640V652" stroke="#008000" stroke-width="1" fill="none"/>
<path d="M1571.5 368V679" stroke="#008000" stroke-width="1"/>
<path d="M1583.5 448V651" stroke="#808000" stroke-width="1"/>
<path d="M1650.5 525V669" stroke="#00ff00" stroke-width="1"/>
<path d="M1696.5 520V647" stroke="#00ff00" stroke-width="1"/>
<path d="M1754.5 518V654" stroke="#808000" stroke-width="1"/>
<path d="M1707.5 553V636" stroke="#808000" stroke-width="1"/>
<path d="M1561.5 556V680" stroke="#00ff00" stroke-width="1"/>
<path d="M1416.5 628V726" stroke="#00ff00" stroke-width="1"/>
<path d="M1480.5 629V690" stroke="#008000" stroke-width="1"/>
<path d="M1468.5 636V678" stroke="#808000" stroke-width="1"/>
<path d="M1325.5 676V740" stroke="#008000" stroke-width="1"/>
<path d="M1401.5 650V714" stroke="#00ff00" stroke-width="1"/>
<path d="M1620.5 585V687" stroke="#008000" stroke-width="1"/>
<path d="M1646.5 590V652" stroke="#00ff00" stroke-width="1"/>
<path d="M1700.5 560V642" stroke="#00ff00" stroke-width="1"/>
<path d="M1715.5 575V638" stroke="#00ff00" stroke-width="1"/>
<path d="M1740.5 592V637" stroke="#808000" stroke-width="1"/>
<path d="M1722.5 585V648" stroke="#808000" stroke-width="1"/>
<path d="M1760.5 600V653" stroke="#008000" stroke-width="1"/>
<path d="M1776.5 620V638" stroke="#808000" stroke-width="1"/>
<path d="M1540.5 620V686" stroke="#808000" stroke-width="1"/>
<path d="M1527.5 612V663" stroke="#808000" stroke-width="1"/>
<path d="M1503.5 652V711" stroke="#00ff00" stroke-width="1"/>
<path d="M1450.5 668V712" stroke="#008000" stroke-width="1"/>
<path d="M1380.5 680V720" stroke="#00ff00" stroke-width="1"/>
<path d="M1360.5 685V732" stroke="#808000" stroke-width="1"/>
<path d="M1754.5 675V766" stroke="#00ff00" stroke-width="1"/>
<path d="M1766.5 664V766" stroke="#00ff00" stroke-width="1"/>
<path d="M1783.5 650V741" stroke="#00ff00" stroke-width="1"/>
<path d="M1652.5 725V758" stroke="#00ff00" stroke-width="1"/>
<path d="M1636.5 702V755" stroke="#00ff00" stroke-width="1"/>
<path d="M1306.5 738V800" stroke="#008000" stroke-width="1"/>
<path d="M1301.5 333V984.5" stroke="#a0a0a0" stroke-width="1"/>
<path d="M1301 984.5H1836" stroke="#b4b4b4" stroke-width="1.2"/>
<path d="M1301.5 981V984" stroke="#b4b4b4" stroke-width="1"/>
<path d="M1380.5 981V984" stroke="#b4b4b4" stroke-width="1"/>
<path d="M1458.5 981V984" stroke="#b4b4b4" stroke-width="1"/>
<path d="M1536.5 981V984" stroke="#b4b4b4" stroke-width="1"/>
<path d="M1615.5 981V984" stroke="#b4b4b4" stroke-width="1"/>
<path d="M1693.5 981V984" stroke="#b4b4b4" stroke-width="1"/>
<path d="M1771.5 981V984" stroke="#b4b4b4" stroke-width="1"/>
<path d="M1302.5 980V984" stroke="#b4b4b4" stroke-width="2"/>
<path d="M1318.5 333V984" stroke="#c4c44a" stroke-width="1"/>
<rect x="1215.5" y="342.5" width="611" height="177" fill="#ffffff" fill-opacity="0.3137" stroke="#ffffff" stroke-width="1"/>
</svg>
<div class="t" style="left:1223.32px;top:369.00px;font-size:25.94px;transform:scaleX(0.9248);transform-origin:0 0;color:#ffffff;">1060 - Robo Recall - Default Settings+Default Settings</div>
<div class="t" style="left:1223.32px;top:419.00px;font-size:25.94px;transform:scaleX(0.9248);transform-origin:0 0;color:#ffffff;">1060 - Robo Recall - Default Settings+Default Settings</div>
<div class="t" style="left:1223.32px;top:469.00px;font-size:25.94px;transform:scaleX(0.9248);transform-origin:0 0;color:#ffffff;">1060 - Robo Recall - Default Settings+Default Settings</div>
<div class="t" style="left:1270.97px;top:403.00px;font-size:24.06px;transform:scaleX(0.9712);transform-origin:0 0;color:#a8a8a8;">30</div>
<div class="t" style="left:1270.43px;top:594.00px;font-size:24.06px;transform:scaleX(0.9726);transform-origin:0 0;color:#a8a8a8;">20</div>
<div class="t" style="left:1271.11px;top:783.00px;font-size:24.06px;transform:scaleX(0.9466);transform-origin:0 0;color:#a8a8a8;">10</div>
<div class="t" style="left:1283.75px;top:974.00px;font-size:24.06px;transform:scaleX(0.9872);transform-origin:0 0;color:#a8a8a8;">0</div>
<div class="t" style="left:1295.10px;top:987.00px;font-size:24.35px;transform:scaleX(1.0268);transform-origin:0 0;color:#a8a8a8;">0</div>
<div class="t" style="left:1365.92px;top:987.00px;font-size:24.35px;transform:scaleX(0.9963);transform-origin:0 0;color:#a8a8a8;">10</div>
<div class="t" style="left:1444.70px;top:987.00px;font-size:24.35px;transform:scaleX(0.9769);transform-origin:0 0;color:#a8a8a8;">20</div>
<div class="t" style="left:1523.22px;top:987.00px;font-size:24.35px;transform:scaleX(0.9675);transform-origin:0 0;color:#a8a8a8;">30</div>
<div class="t" style="left:1601.97px;top:987.00px;font-size:24.35px;transform:scaleX(0.9493);transform-origin:0 0;color:#a8a8a8;">40</div>
<div class="t" style="left:1679.76px;top:987.00px;font-size:24.35px;transform:scaleX(0.9675);transform-origin:0 0;color:#a8a8a8;">50</div>
<div class="t" style="left:1757.78px;top:987.00px;font-size:24.35px;transform:scaleX(0.9769);transform-origin:0 0;color:#a8a8a8;">60</div>
<div class="t" style="left:1519.41px;top:1013.00px;font-size:24.93px;transform:scaleX(0.9843);transform-origin:0 0;color:#a8a8a8;">Time (s)</div>
<div class="a" style="left:1242px;top:746.4px;width:0;height:0"><div class="a" style="left:0;top:0;transform:rotate(-90deg);transform-origin:0 0"><div class="t" style="left:-1.96px;top:-3.00px;font-size:26.96px;transform:scaleX(0.9068);transform-origin:0 0;color:#a8a8a8;">Frametime (ms)</div></div></div>
<div class="t" style="left:1305.67px;top:915.00px;font-size:27.54px;transform:scaleX(1.1984);transform-origin:0 0;color:#dddddd;">]</div>
<svg class="a" style="left:0;top:0;overflow:visible" width="1" height="1"><path d="M1301.5 922 Q1305 930.5 1301.5 939" stroke="#c8c8c8" stroke-width="1.6" fill="none"/></svg>
</body></html>
